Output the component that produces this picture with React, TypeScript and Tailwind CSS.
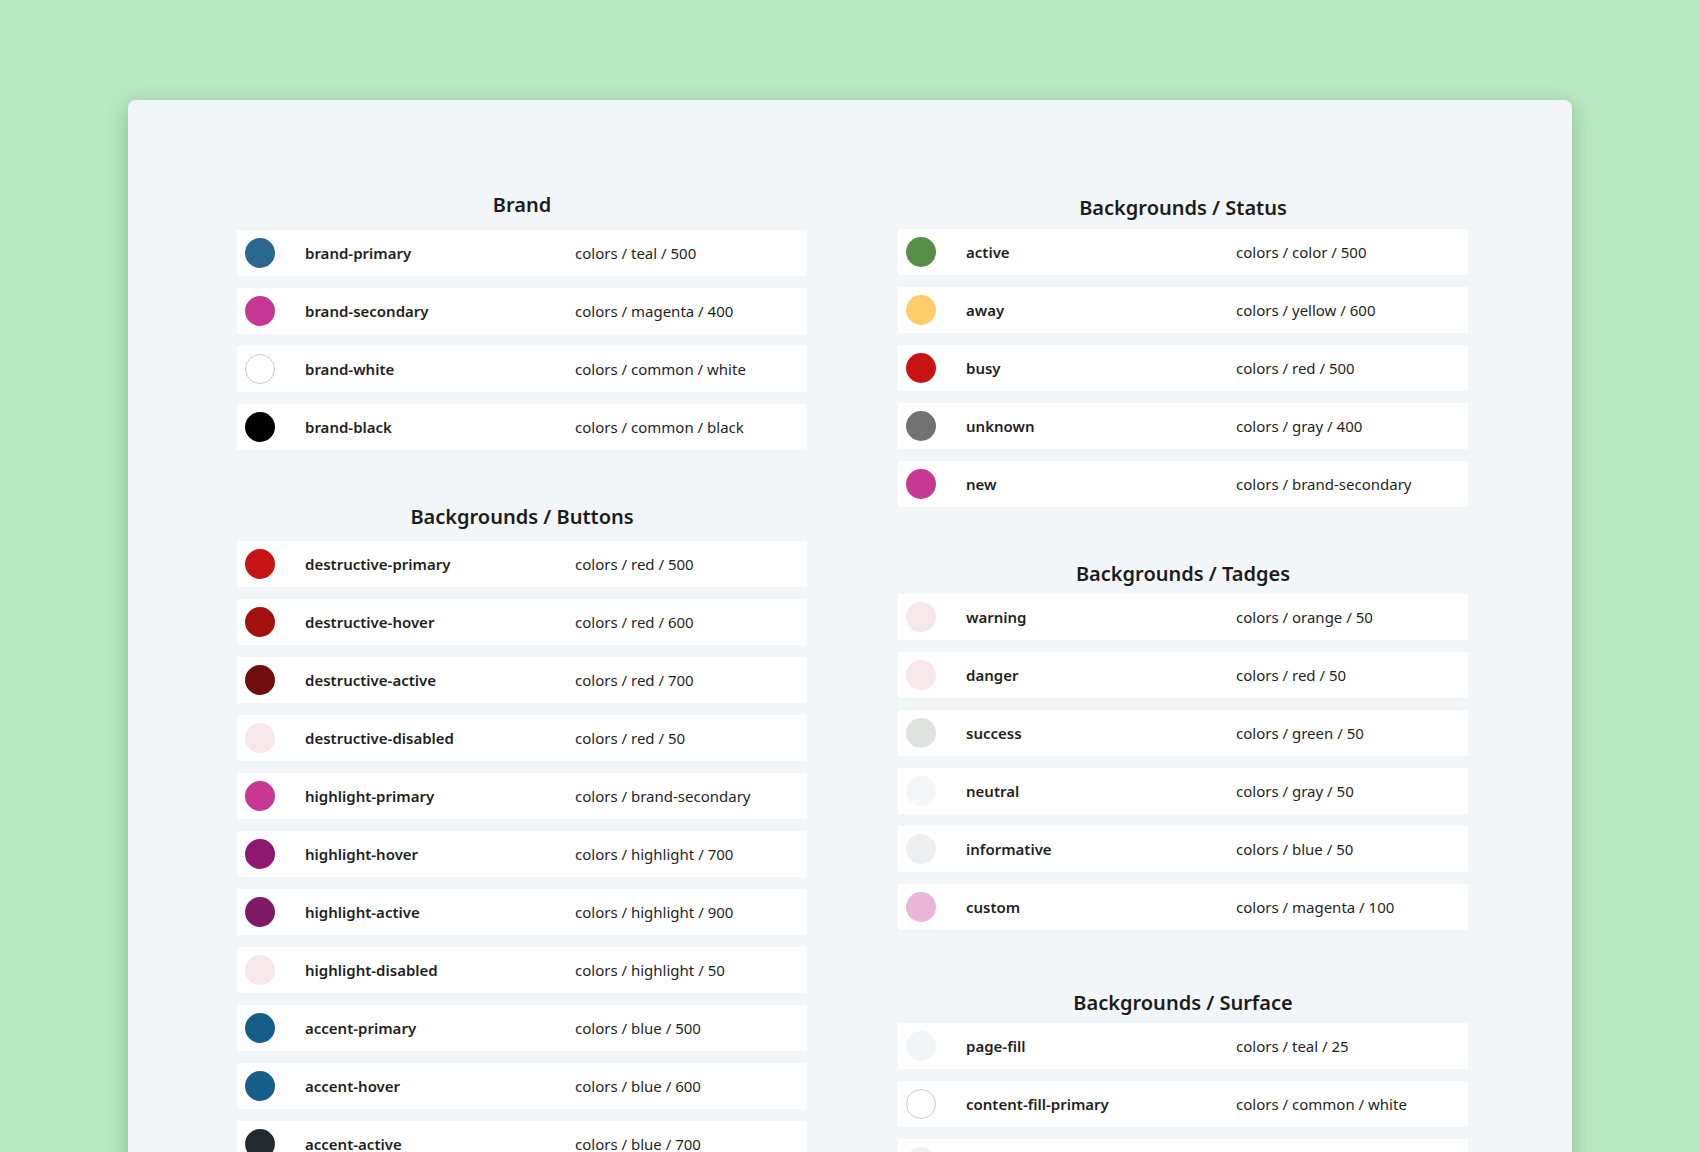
import React from "react";

type Swatch = { name: string; value: string; color: string; border?: boolean };

const brand: Swatch[] = [
  { name: "brand-primary", value: "colors / teal / 500", color: "#2a6890" },
  { name: "brand-secondary", value: "colors / magenta / 400", color: "#c73894" },
  { name: "brand-white", value: "colors / common / white", color: "#ffffff", border: true },
  { name: "brand-black", value: "colors / common / black", color: "#000000" },
];

const buttons: Swatch[] = [
  { name: "destructive-primary", value: "colors / red / 500", color: "#c81414" },
  { name: "destructive-hover", value: "colors / red / 600", color: "#a3110f" },
  { name: "destructive-active", value: "colors / red / 700", color: "#700d0d" },
  { name: "destructive-disabled", value: "colors / red / 50", color: "#f6e7ea" },
  { name: "highlight-primary", value: "colors / brand-secondary", color: "#c73894" },
  { name: "highlight-hover", value: "colors / highlight / 700", color: "#8f176f" },
  { name: "highlight-active", value: "colors / highlight / 900", color: "#7f1a68" },
  { name: "highlight-disabled", value: "colors / highlight / 50", color: "#f6e7ea" },
  { name: "accent-primary", value: "colors / blue / 500", color: "#175f8b" },
  { name: "accent-hover", value: "colors / blue / 600", color: "#175f8b" },
  { name: "accent-active", value: "colors / blue / 700", color: "#23292f" },
];

const status: Swatch[] = [
  { name: "active", value: "colors / color / 500", color: "#558f48" },
  { name: "away", value: "colors / yellow / 600", color: "#ffcd6a" },
  { name: "busy", value: "colors / red / 500", color: "#c81414" },
  { name: "unknown", value: "colors / gray / 400", color: "#727272" },
  { name: "new", value: "colors / brand-secondary", color: "#c73894" },
];

const tadges: Swatch[] = [
  { name: "warning", value: "colors / orange / 50", color: "#f6e7ea" },
  { name: "danger", value: "colors / red / 50", color: "#f6e7ea" },
  { name: "success", value: "colors / green / 50", color: "#dfe3df" },
  { name: "neutral", value: "colors / gray / 50", color: "#f4f6f8" },
  { name: "informative", value: "colors / blue / 50", color: "#eceef0" },
  { name: "custom", value: "colors / magenta / 100", color: "#ebb6d5" },
];

// last row is cut off by the bottom edge, only its swatch shows
const surface: Swatch[] = [
  { name: "page-fill", value: "colors / teal / 25", color: "#f1f5f8" },
  { name: "content-fill-primary", value: "colors / common / white", color: "#ffffff", border: true },
  { name: "", value: "", color: "#f1f2f3" },
];

function Row({ s }: { s: Swatch }) {
  return (
    <div className="flex h-[46px] items-center bg-white">
      <span
        className={`ml-2 h-[30px] w-[30px] shrink-0 rounded-full ${s.border ? "border border-[#c9c9c9]" : ""}`}
        style={{ backgroundColor: s.color }}
      />
      <span className="ml-[30px] w-[270px] text-[15px] font-semibold text-[#1f1f1f]">{s.name}</span>
      <span className="text-[15px] text-[#1f1f1f]">{s.value}</span>
    </div>
  );
}

function Section({ title, items, className, titleGap }: { title: string; items: Swatch[]; className?: string; titleGap: string }) {
  return (
    <section className={className}>
      <h2 className={`h-[28px] text-center text-[20px] font-semibold leading-[28px] text-[#1c1c1c] ${titleGap}`}>{title}</h2>
      <div className="flex flex-col gap-3">
        {items.map((s, i) => (
          <Row key={i} s={s} />
        ))}
      </div>
    </section>
  );
}

export default function App() {
  return (
    <div className="h-[1152px] overflow-hidden bg-[#b9e8c3] pt-[100px] font-['Noto_Sans',sans-serif]">
      <div className="ml-[128px] w-[1444px] rounded-lg bg-[#f2f6f9] pb-40 pl-[109px] pt-[91px] shadow-[0_6px_22px_rgba(20,70,35,0.28)]">
        <div className="grid grid-cols-[570px_570px] items-start gap-x-[91px]">
          <div>
            <Section title="Brand" items={brand} titleGap="mb-[11px]" />
            <Section title="Backgrounds / Buttons" items={buttons} className="mt-[53px]" titleGap="mb-[10px]" />
          </div>
          <div className="pt-[3px]">
            <Section title="Backgrounds / Status" items={status} titleGap="mb-[7px]" />
            <Section title="Backgrounds / Tadges" items={tadges} className="mt-[53px]" titleGap="mb-[6px]" />
            <Section title="Backgrounds / Surface" items={surface} className="mt-[59px]" titleGap="mb-[6px]" />
          </div>
        </div>
      </div>
    </div>
  );
}
